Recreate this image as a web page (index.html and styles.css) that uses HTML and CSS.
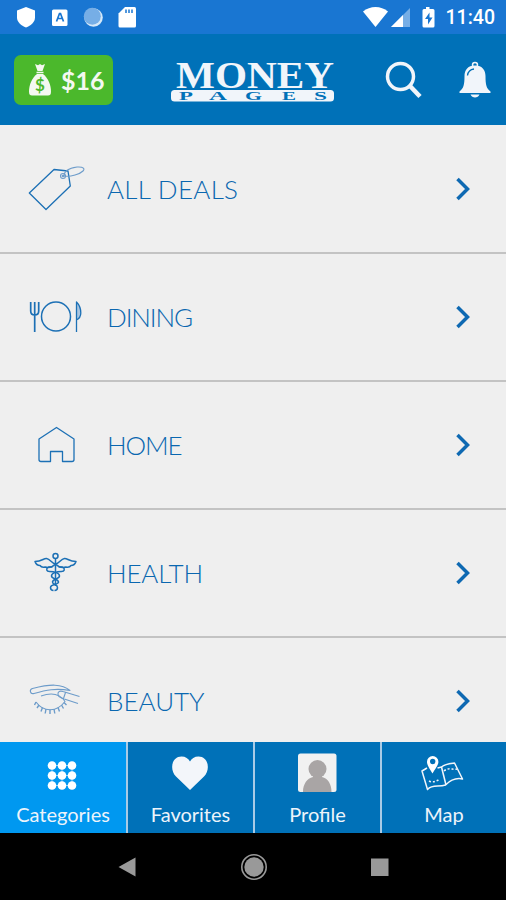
FILE: index.html
```html
<!DOCTYPE html>
<html lang="en">

<head>
    <meta charset="UTF-8">
    <meta name="viewport" content="width=device-width, initial-scale=1.0">
    <title>Money Pages</title>
    <link rel="stylesheet" href="styles.css">
</head>

<body>
    <div class="app">
        <!-- Status bar -->
        <div class="status-bar">
            <svg class="status-left" width="140" height="34" viewBox="0 0 140 34">
                <path d="M26 7l9 3.500v7c0 4.500-4 8-9 10-5-2-9-5.500-9-10v-7z" fill="#fff"/>
                <rect x="52" y="9.500" width="15.500" height="16.500" rx="1.500" fill="#fff"/>
                <path d="M56.500 21.500l3-8h1l3 8M57.500 18.500h5" fill="none" stroke="#1976d2" stroke-width="1.700"/>
                <circle cx="93.500" cy="17.500" r="9.300" fill="#d5e8f8"/>
                <circle cx="92.300" cy="16.300" r="8.500" fill="#76aee6"/>
                <path d="M125 7h9.500a1.500 1.500 0 0 1 1.500 1.500v17.500a1.500 1.500 0 0 1-1.500 1.500h-14.500a1.500 1.500 0 0 1-1.500-1.500V13.500z" fill="#fff"/>
                <path d="M126 9.500v3.500M129 9.500v3.500M132 9.500v3.500" stroke="#1976d2" stroke-width="1.500"/>
            </svg>
            <svg width="76" height="34" viewBox="0 0 76 34">
                <path d="M0 11.500C7 5.500 18 5.500 25 11.500L12.500 27z" fill="#fff"/>
                <path d="M47 8v19H28z" fill="#76aee6"/>
                <path d="M40 15v12H28z" fill="#fff"/>
                <path d="M63 7h3.500V9H70a1.500 1.500 0 0 1 1.500 1.500V26a1.500 1.500 0 0 1-1.500 1.500H61a1.500 1.500 0 0 1-1.500-1.500V10.500A1.500 1.500 0 0 1 61 9h2z" fill="#fff"/>
                <path d="M66.500 12.500l-4.500 6.500h3v5.500l4.500-7h-3z" fill="#1976d2"/>
            </svg>
            <span class="clock">11:40</span>
        </div>

        <!-- Header -->
        <header class="header">
            <div class="balance">
                <svg width="24" height="34" viewBox="0 0 24 34">
                    <path d="M7 1l3 1.200L12 1l2 1.200L17 1l-2.500 7h-5z" fill="#f4f8f1"/>
                    <path d="M8.500 9.500h7" stroke="#f4f8f1" stroke-width="1.500"/>
                    <path d="M9 11h6c5 4 8 10.500 8 17.500 0 3-1 4-3 4H4c-2 0-3-1-3-4C1 21.500 4 15 9 11z" fill="#f4f8f1"/>
                    <text class="bag-sign" x="12" y="28">$</text>
                </svg>
                <span>$16</span>
            </div>
            <svg class="logo" width="168" height="42" viewBox="0 0 168 42">
                <text class="logo-top" x="6" y="26" textLength="158" lengthAdjust="spacingAndGlyphs">MONEY</text>
                <rect x="1" y="28" width="163" height="11.500" rx="3.500" fill="#f1f5fa"/>
                <g class="logo-bottom">
                    <text x="9" y="37.500" textLength="14" lengthAdjust="spacingAndGlyphs">P</text>
                    <text x="39" y="37.500" textLength="18" lengthAdjust="spacingAndGlyphs">A</text>
                    <text x="75" y="37.500" textLength="17" lengthAdjust="spacingAndGlyphs">G</text>
                    <text x="112" y="37.500" textLength="14" lengthAdjust="spacingAndGlyphs">E</text>
                    <text x="144" y="37.500" textLength="13" lengthAdjust="spacingAndGlyphs">S</text>
                </g>
            </svg>
            <svg class="search" width="38" height="38" viewBox="0 0 38 38">
                <circle cx="15.500" cy="15.500" r="13" fill="none" stroke="#f1f5fa" stroke-width="3.500"/>
                <path d="M24.500 24.500L35 35.500" stroke="#f1f5fa" stroke-width="4.500"/>
            </svg>
            <svg class="bell" width="34" height="38" viewBox="0 0 34 38">
                <circle cx="17" cy="4" r="2.500" fill="none" stroke="#f1f5fa" stroke-width="1.500"/>
                <path d="M17 4.500c7.500 0 10.500 5 10.500 10.500 0 9 1 12.500 5 15.500v1.500h-31v-1.500c4-3 5-6.500 5-15.500C6.500 9.500 9.500 4.500 17 4.500z" fill="#f1f5fa"/>
                <path d="M12.500 33.500c1.500 4 7.500 4 9 0z" fill="#f1f5fa"/>
                <path d="M9.500 14.500c.5-3.500 2.500-6 6.500-6.500" fill="none" stroke="#0071b8" stroke-width="1.300"/>
            </svg>
        </header>

        <!-- Category list -->
        <main class="categories">
            <a class="row" href="#">
                <svg class="row-icon" viewBox="0 0 60 48">
                    <path d="M3.300 28L28 4.500l14 1.500 2.300 15L20 44.500z"/>
                    <g class="fine">
                        <circle cx="37" cy="11" r="2.500"/>
                        <circle cx="37" cy="11" r=".8"/>
                        <path d="M38 11c0-5 6-8 13-9 7-.5 8 2 6 4-3 3-12 6-19 5"/>
                    </g>
                </svg>
                <span class="label deals">ALL DEALS</span>
                <svg class="chevron" viewBox="0 0 16 26"><path d="M2.500 3l10 10-10 10"/></svg>
            </a>
            <a class="row" href="#">
                <svg class="row-icon" viewBox="0 0 60 48">
                    <path d="M4.700 9v9c0 3 1.500 4 4 4s4-1 4-4V9M8.700 9v30" stroke-width="1.700"/>
                    <circle cx="30" cy="23.500" r="14.500" stroke-width="1.500"/>
                    <path d="M50.500 39V9c3 3 4.300 7 4.300 11 0 3-1.300 5.500-4.300 7" fill="#a9c5e0"/>
                </svg>
                <span class="label dining">DINING</span>
                <svg class="chevron" viewBox="0 0 16 26"><path d="M2.500 3l10 10-10 10"/></svg>
            </a>
            <a class="row" href="#">
                <svg class="row-icon" viewBox="0 0 60 48">
                    <path d="M30.500 6.500L48 18v20.500a2 2 0 0 1-2 2h-9.500V30.500h-12v10H15a2 2 0 0 1-2-2V18z"/>
                </svg>
                <span class="label home">HOME</span>
                <svg class="chevron" viewBox="0 0 16 26"><path d="M2.500 3l10 10-10 10"/></svg>
            </a>
            <a class="row" href="#">
                <svg class="row-icon" viewBox="0 0 60 48">
                    <g stroke-width="1.500">
                        <circle cx="29.500" cy="7" r="2.500"/>
                        <path d="M29.500 10v27"/>
                        <path d="M29.500 15c-4-.5-5-5-9-5.500-3-.3-4.500 3-11.500 3 1 3 3 4 5 4 1 1.500 3 2 5 1.500 3 1 7 .5 10.500-3z"/>
                        <path d="M29.500 15c4-.5 5-5 9-5.500 3-.3 4.500 3 11.500 3-1 3-3 4-5 4-1 1.500-3 2-5 1.500-3 1-7 .5-10.500-3z"/>
                        <path d="M26.500 18h-4c-3 2-2 4.500 1 4.500 5 0 10 1.500 10 4.500 0 3-7 3-7 6s5 2 5 5.500c0 2-1 3-3 3"/>
                        <path d="M32.500 18h4c3 2 2 4.500-1 4.500-5 0-10 1.500-10 4.500 0 3 7 3 7 6s-8 2-8 5.500c0 2 1 3 3 3"/>
                    </g>
                </svg>
                <span class="label health">HEALTH</span>
                <svg class="chevron" viewBox="0 0 16 26"><path d="M2.500 3l10 10-10 10"/></svg>
            </a>
            <a class="row" href="#">
                <svg class="row-icon" viewBox="0 0 60 48">
                    <g class="fine">
                        <path d="M44 13.500C36 6.500 24 7 6.500 11.500c-3.500 1-2.500 6 1.500 5 12-3.500 22-5.500 36-3z"/>
                        <path d="M53.500 19.500L37 14.500c-3-1-5.500 0-5 3 .2 2 2 3 4 3.700L52 26.500M39.500 15.500l-2 6"/>
                        <path d="M10 25c8 11 21 10 29-.5C34 17 25 15.500 15 19"/>
                        <path d="M10 25l-1.500 3M13 28l-2 3M16.500 30.500l-1.500 4M20 32l-.8 4.500M24 32.500v4.500M28 32l.8 4.500M32 30.500l1.500 4M35.500 28l2 3.500M38 25.500l2.500 2.500" stroke-width="1.400"/>
                    </g>
                </svg>
                <span class="label beauty">BEAUTY</span>
                <svg class="chevron" viewBox="0 0 16 26"><path d="M2.500 3l10 10-10 10"/></svg>
            </a>
        </main>

        <!-- Tab bar -->
        <nav class="tabs">
            <a class="tab active" href="#">
                <svg width="44" height="42" viewBox="0 0 44 42">
                    <path d="M11 12.500h20M11 22.500h20M11 32.500h20M11 12v20M21 12v20M31 12v20" stroke="#8acbfa" stroke-width="1"/>
                    <g fill="#fff">
                        <circle cx="11" cy="12.500" r="4.300"/><circle cx="21" cy="12.500" r="4.300"/><circle cx="31" cy="12.500" r="4.300"/>
                        <circle cx="11" cy="22.500" r="4.300"/><circle cx="21" cy="22.500" r="4.300"/><circle cx="31" cy="22.500" r="4.300"/>
                        <circle cx="11" cy="32.500" r="4.300"/><circle cx="21" cy="32.500" r="4.300"/><circle cx="31" cy="32.500" r="4.300"/>
                    </g>
                </svg>
                <span>Categories</span>
            </a>
            <a class="tab" href="#">
                <svg width="44" height="42" viewBox="0 0 44 42">
                    <path d="M21 37L7 23.500C0 16 3 3.500 12.500 3.500c4 0 7 2 8.500 5 1.500-3 4.500-5 8.500-5 9.500 0 12.500 12.500 5.500 20z" fill="#f3f6fa"/>
                </svg>
                <span>Favorites</span>
            </a>
            <a class="tab" href="#">
                <svg width="44" height="42" viewBox="0 0 44 42">
                    <rect x="2" y=".5" width="38.500" height="38.500" rx="2.500" fill="#f1f1f1"/>
                    <circle cx="21.500" cy="16" r="9" fill="#a9a5a5"/>
                    <path d="M17 21h9v3c6 1.500 9.500 7 9.500 15H7c0-8 4-13.500 10-15z" fill="#a9a5a5"/>
                </svg>
                <span>Profile</span>
            </a>
            <a class="tab" href="#">
                <svg width="44" height="42" viewBox="0 0 44 42">
                    <g fill="none" stroke="#f1f5fa" stroke-width="1.500" stroke-linejoin="round">
                        <path d="M5 15l-5 3 5.500 18.500c5-5.500 11-2 18-4.500 5-5 10-7.500 17-6L32.500 10c-5 .5-9 .5-13 4l-4 1"/>
                        <path d="M19.500 14L24 32"/>
                        <path d="M7 28c4 2 7 0 11-1.500M22 18c5-4 8-1 13-2" stroke-dasharray="2 2"/>
                    </g>
                    <path d="M10.500 20.500C7 14.500 5 12 5 8.700a5.700 5.700 0 0 1 11.400 0c0 3.300-2.400 5.800-5.900 11.800z" fill="#fff"/>
                    <circle cx="10.700" cy="8.500" r="2.700" fill="#0071b8"/>
                </svg>
                <span>Map</span>
            </a>
        </nav>

        <!-- System navigation -->
        <div class="system-nav">
            <svg width="28" height="28" viewBox="0 0 28 28"><path d="M5.500 14L22.500 4.500v19z" fill="#999"/></svg>
            <svg width="28" height="28" viewBox="0 0 28 28">
                <circle cx="14" cy="14" r="12.200" fill="none" stroke="#999" stroke-width="1.600"/>
                <circle cx="14" cy="14" r="9.700" fill="#999"/>
            </svg>
            <svg width="28" height="28" viewBox="0 0 28 28"><rect x="5" y="5.500" width="17.500" height="17.500" fill="#999"/></svg>
        </div>
    </div>
</body>

</html>
```

FILE: styles.css
```css
/* Base styles */
* {
    box-sizing: border-box;
}

body {
    margin: 0;
    background-color: #000;
    font-family: Lato, sans-serif;
}

a {
    color: inherit;
    text-decoration: none;
}

svg {
    display: block;
    flex-shrink: 0;
    overflow: visible;
}

.app {
    display: flex;
    flex-direction: column;
    width: 506px;
    height: 900px;
    overflow: hidden;
}

/* Status bar */
.status-bar {
    display: flex;
    align-items: center;
    height: 34px;
    padding-right: 11px;
    background-color: #1976d2;
    flex-shrink: 0;
}

.status-left {
    margin-right: 223px;
}

.clock {
    margin: 2px 0 0 auto;
    color: #fff;
    font-family: Roboto, sans-serif;
    font-size: 19.5px;
    font-weight: 500;
    line-height: 34px;
}

/* Header */
.header {
    display: flex;
    align-items: center;
    height: 91px;
    padding: 0 14px;
    background-color: #0071b8;
    flex-shrink: 0;
}

.balance {
    display: flex;
    align-items: center;
    gap: 9px;
    width: 99px;
    height: 50px;
    padding-left: 14px;
    border-radius: 7px;
    background-color: #4bb82c;
    color: #f4f8f1;
    font-size: 25px;
    font-weight: 700;
}

.bag-sign {
    fill: #4bb82c;
    font-size: 17px;
    font-weight: 700;
    text-anchor: middle;
}

.logo {
    margin: 7px 0 0 57px;
}

.logo-top {
    fill: #f1f5fa;
    font-family: "Liberation Serif", serif;
    font-size: 37px;
    font-weight: 700;
}

.logo-bottom {
    fill: #0071b8;
    font-family: "Liberation Serif", serif;
    font-size: 12px;
    font-weight: 700;
}

.search {
    margin-left: 47px;
}

.bell {
    margin-left: 35px;
}

/* Category list */
.categories {
    height: 617px;
    padding-top: 1px;
    overflow: hidden;
    background-color: #efefef;
    flex-shrink: 0;
}

.row {
    display: flex;
    align-items: center;
    height: 128px;
    padding: 0 35px 0 26px;
    border-bottom: 2px solid #c3c3c3;
    color: #0a67b0;
}

.row-icon {
    width: 60px;
    height: 48px;
    fill: none;
    stroke: #1c70b5;
    stroke-width: 1.3;
    stroke-linejoin: round;
}

.fine {
    stroke: #6d9cca;
    stroke-width: 1.1;
}

.label {
    margin-left: 21px;
    font-size: 26px;
    font-weight: 300;
    white-space: nowrap;
}

.deals {
    letter-spacing: 0.3px;
}

.dining,
.home {
    letter-spacing: -1.1px;
}

.health {
    letter-spacing: -0.2px;
}

.chevron {
    width: 16px;
    height: 26px;
    margin-left: auto;
    fill: none;
    stroke: #0e69b2;
    stroke-width: 3.5;
}

/* Tab bar */
.tabs {
    display: grid;
    grid-template-columns: 126px 125px 125px 124px;
    gap: 2px;
    height: 91px;
    background-color: #a9cbe6;
    flex-shrink: 0;
}

.tab {
    display: flex;
    flex-direction: column;
    align-items: center;
    padding-top: 11px;
    background-color: #0071b8;
    color: #edf4fb;
    font-size: 20px;
    line-height: 38px;
}

.tab.active {
    background-color: #0098f0;
}

/* System navigation */
.system-nav {
    display: flex;
    justify-content: space-between;
    height: 67px;
    padding: 20px 112px 0 113px;
    background-color: #000;
    flex-shrink: 0;
}
```
